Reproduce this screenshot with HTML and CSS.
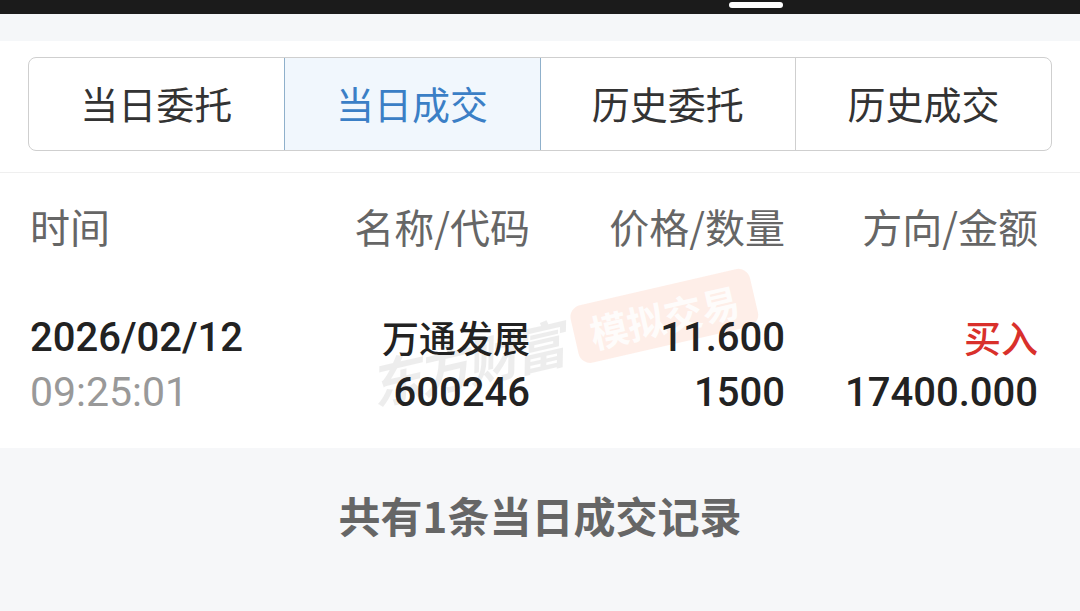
FILE: index.html
```html
<!DOCTYPE html>
<html lang="zh-CN">
<head>
    <meta charset="UTF-8">
    <meta name="viewport" content="width=device-width, initial-scale=1.0">
    <title>当日成交</title>
    <link rel="stylesheet" href="styles.css">
</head>
<body>
    <div class="status-bar">
        <span class="status-pill"></span>
    </div>
    <div class="top-gap"></div>

    <div class="tabs-wrap">
        <div class="tabs">
            <div class="tab">当日委托</div>
            <div class="tab active">当日成交</div>
            <div class="tab">历史委托</div>
            <div class="tab">历史成交</div>
        </div>
    </div>

    <div class="table">
        <div class="watermark">
            <span class="wm-brand">东方财富</span>
            <span class="wm-tag">模拟交易</span>
        </div>

        <div class="row head">
            <div class="cell left">时间</div>
            <div class="cell">名称/代码</div>
            <div class="cell">价格/数量</div>
            <div class="cell">方向/金额</div>
        </div>
        <div class="row data">
            <div class="cell left">
                <div class="main">2026/02/12</div>
                <div class="sub">09:25:01</div>
            </div>
            <div class="cell">
                <div class="main cn">万通发展</div>
                <div class="main">600246</div>
            </div>
            <div class="cell">
                <div class="main">11.600</div>
                <div class="main">1500</div>
            </div>
            <div class="cell">
                <div class="main cn buy">买入</div>
                <div class="main">17400.000</div>
            </div>
        </div>
    </div>

    <div class="footer">共有1条当日成交记录</div>
</body>
</html>
```

FILE: styles.css
```css
body {
    margin: 0;
    font-family: Roboto, "Noto Sans", "Noto Sans CJK SC", sans-serif;
    background: #f6f7f9;
    color: #222;
}
.status-bar {
    height: 14px;
    background: #1b1b1b;
    position: relative;
}
.status-pill {
    position: absolute;
    left: 729px;
    top: 2px;
    width: 54px;
    height: 6px;
    border-radius: 3px;
    background: #fff;
}
.top-gap {
    height: 27px;
    background: #f5f7f9;
}
.tabs-wrap {
    background: #fff;
    padding: 16px 28px 21px 28px;
    border-bottom: 1px solid #efefef;
}
.tabs {
    display: flex;
    height: 92px;
    border: 1px solid #cfcfcf;
    border-radius: 8px;
    overflow: hidden;
}
.tab {
    flex: 1;
    display: flex;
    align-items: center;
    justify-content: center;
    padding-bottom: 3px;
    font-family: "Noto Sans CJK SC", sans-serif;
    font-size: 38px;
    color: #333;
    border-left: 1px solid #cfcfcf;
}
.tab:first-child {
    border-left: none;
}
.tab.active {
    background: #f1f7fd;
    color: #3b7fc6;
    border: 1px solid #8fb0cb;
    margin: -1px 0;
}
.tab.active + .tab {
    border-left: none;
}
.table {
    position: relative;
    background: #fff;
    overflow: hidden;
}
.row {
    display: grid;
    grid-template-columns: 250px 250px 255px 253px;
    padding: 0 42px 0 30px;
    position: relative;
    z-index: 1;
}
.cell {
    text-align: right;
}
.cell.left {
    text-align: left;
}
.head {
    height: 106px;
    padding-bottom: 8px;
    align-items: center;
    font-family: "Noto Sans CJK SC", sans-serif;
    font-size: 40px;
    color: #666;
}
.data {
    padding-top: 23px;
    padding-bottom: 28px;
    font-size: 40px;
    line-height: 55px;
}
.main {
    font-weight: 500;
    color: #222;
}
.main.cn {
    font-family: "Noto Sans CJK SC", sans-serif;
    font-size: 37px;
}
.sub {
    font-size: 41px;
    color: #999;
}
.buy {
    color: #d9302b;
}
.watermark {
    position: absolute;
    left: 365px;
    top: 129px;
    display: flex;
    align-items: center;
    gap: 14px;
    transform: rotate(-13deg);
    z-index: 0;
    pointer-events: none;
}
.wm-brand {
    font-family: "Noto Sans CJK SC", sans-serif;
    font-size: 52px;
    font-weight: 700;
    font-style: italic;
    color: rgba(0, 0, 0, 0.07);
    letter-spacing: -3px;
}
.wm-tag {
    font-family: "Noto Sans CJK SC", sans-serif;
    font-size: 38px;
    font-weight: 700;
    color: rgba(255, 255, 255, 0.85);
    background: rgba(246, 120, 80, 0.13);
    border-radius: 12px;
    padding: 2px 16px;
}
.footer {
    padding-top: 36px;
    text-align: center;
    font-family: "Noto Sans CJK SC", sans-serif;
    font-size: 42px;
    font-weight: 700;
    color: #666;
}
```
